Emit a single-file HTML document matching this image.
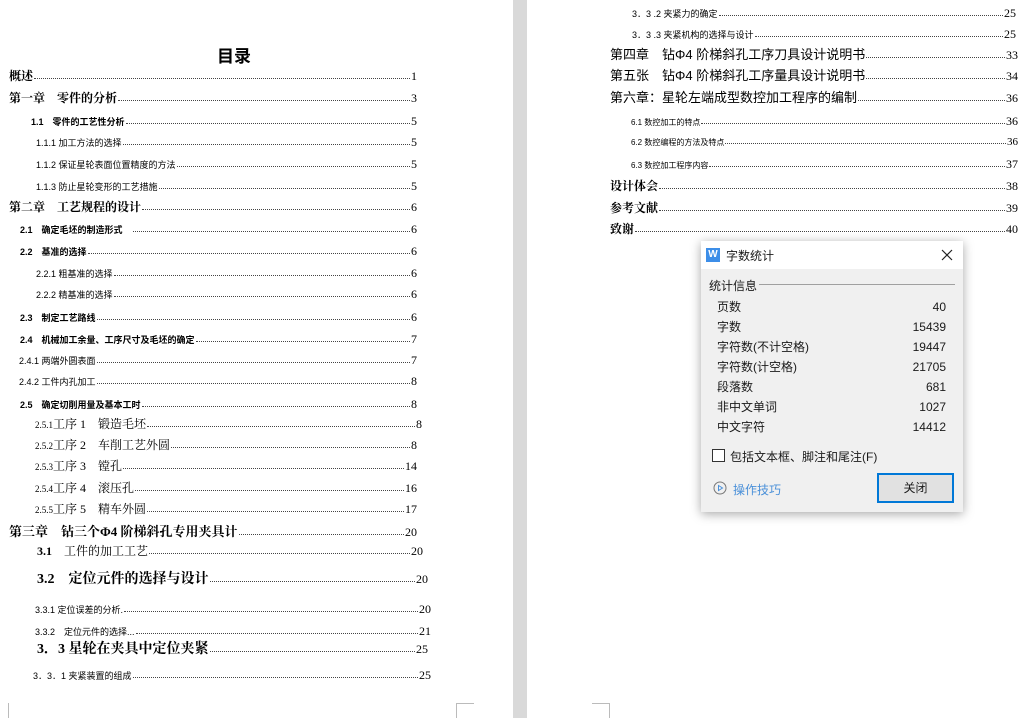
<!DOCTYPE html>
<html><head><meta charset="utf-8">
<style>
*{margin:0;padding:0;box-sizing:border-box}
body{width:1036px;height:718px;overflow:hidden;background:#fff;position:relative;font-family:"Liberation Serif","Noto Serif CJK SC","Noto Sans CJK SC",serif;color:#000}
.r{position:absolute;display:flex;align-items:baseline;white-space:nowrap;line-height:1}
.r .d{flex:1;border-bottom:1px dotted #444;margin:0 1px;transform:translateY(-1px)}
.b{font-weight:bold}
.s{font-family:"Liberation Sans","Noto Sans CJK SC",sans-serif}
.n{font-weight:normal;font-size:12px;font-family:"Liberation Serif",serif}
.gap{position:absolute;left:513px;top:0;width:14px;height:718px;background:#d9d9d9}
.dlg{position:absolute;left:701px;top:241px;width:262px;height:271px;background:#f0f0f0;box-shadow:0 2px 10px rgba(0,0,0,.35);font-family:"Liberation Sans","Noto Sans CJK SC",sans-serif;font-size:12px;color:#1a1a1a}
.dlg .t{height:28px;background:#fff;position:relative}
.dlg .row{position:absolute;left:16px;right:17px;display:flex;justify-content:space-between;align-items:baseline;line-height:14px}
</style></head><body>
<div class="gap"></div>
<div style="position:absolute;left:217px;top:42px;font-size:17px;font-weight:bold;font-family:'Noto Sans CJK SC',sans-serif">目录</div>

<div class="r b" style="left:9px;top:70px;width:408px;font-size:12px"><span>概述</span><span class="d"></span><span class="n">1</span></div>
<div class="r b" style="left:9px;top:92px;width:408px;font-size:12px"><span>第一章　零件的分析</span><span class="d"></span><span class="n">3</span></div>
<div class="r b s" style="left:31px;top:115px;width:386px;font-size:9px"><span>1.1　零件的工艺性分析</span><span class="d"></span><span class="n">5</span></div>
<div class="r s" style="left:36px;top:136px;width:381px;font-size:9px"><span>1.1.1 加工方法的选择</span><span class="d"></span><span class="n">5</span></div>
<div class="r s" style="left:36px;top:158px;width:381px;font-size:9px"><span>1.1.2 保证星轮表面位置精度的方法</span><span class="d"></span><span class="n">5</span></div>
<div class="r s" style="left:36px;top:180px;width:381px;font-size:9px"><span>1.1.3 防止星轮变形的工艺措施</span><span class="d"></span><span class="n">5</span></div>
<div class="r b" style="left:9px;top:201px;width:408px;font-size:12px"><span>第二章　工艺规程的设计</span><span class="d"></span><span class="n">6</span></div>
<div class="r b s" style="left:20px;top:223px;width:397px;font-size:9px"><span>2.1　确定毛坯的制造形式　</span><span class="d"></span><span class="n">6</span></div>
<div class="r b s" style="left:20px;top:245px;width:397px;font-size:9px"><span>2.2　基准的选择</span><span class="d"></span><span class="n">6</span></div>
<div class="r s" style="left:36px;top:267px;width:381px;font-size:9px"><span>2.2.1 粗基准的选择</span><span class="d"></span><span class="n">6</span></div>
<div class="r s" style="left:36px;top:288px;width:381px;font-size:9px"><span>2.2.2 精基准的选择</span><span class="d"></span><span class="n">6</span></div>
<div class="r b s" style="left:20px;top:311px;width:397px;font-size:9px"><span>2.3　制定工艺路线</span><span class="d"></span><span class="n">6</span></div>
<div class="r b s" style="left:20px;top:333px;width:397px;font-size:9px"><span>2.4　机械加工余量、工序尺寸及毛坯的确定</span><span class="d"></span><span class="n">7</span></div>
<div class="r s" style="left:19px;top:354px;width:398px;font-size:9px"><span>2.4.1 两端外圆表面</span><span class="d"></span><span class="n">7</span></div>
<div class="r s" style="left:19px;top:375px;width:398px;font-size:9px"><span>2.4.2 工件内孔加工</span><span class="d"></span><span class="n">8</span></div>
<div class="r b s" style="left:20px;top:398px;width:397px;font-size:9px"><span>2.5　确定切削用量及基本工时</span><span class="d"></span><span class="n">8</span></div>
<div class="r" style="left:35px;top:418px;width:387px;font-size:12px"><span><small style="font-size:9px">2.5.1</small>工序 1　锻造毛坯</span><span class="d"></span><span>8</span></div>
<div class="r" style="left:35px;top:439px;width:382px;font-size:12px"><span><small style="font-size:9px">2.5.2</small>工序 2　车削工艺外圆</span><span class="d"></span><span>8</span></div>
<div class="r" style="left:35px;top:460px;width:382px;font-size:12px"><span><small style="font-size:9px">2.5.3</small>工序 3　镗孔</span><span class="d"></span><span>14</span></div>
<div class="r" style="left:35px;top:482px;width:382px;font-size:12px"><span><small style="font-size:9px">2.5.4</small>工序 4　滚压孔</span><span class="d"></span><span>16</span></div>
<div class="r" style="left:35px;top:503px;width:382px;font-size:12px"><span><small style="font-size:9px">2.5.5</small>工序 5　精车外圆</span><span class="d"></span><span>17</span></div>
<div class="r b" style="left:9px;top:525px;width:408px;font-size:13px"><span>第三章　钻三个Φ4 阶梯斜孔专用夹具计</span><span class="d"></span><span class="n">20</span></div>
<div class="r" style="left:37px;top:545px;width:386px;font-size:12px"><span><b>3.1</b>　工件的加工工艺</span><span class="d"></span><span>20</span></div>
<div class="r b" style="left:37px;top:573px;width:391px;font-size:14px"><span>3.2　定位元件的选择与设计</span><span class="d"></span><span class="n">20</span></div>
<div class="r s" style="left:35px;top:603px;width:396px;font-size:9px"><span>3.3.1 定位误差的分析.</span><span class="d"></span><span class="n">20</span></div>
<div class="r s" style="left:35px;top:625px;width:396px;font-size:9px"><span>3.3.2　定位元件的选择...</span><span class="d"></span><span class="n">21</span></div>
<div class="r b" style="left:37px;top:643px;width:391px;font-size:14px"><span>3．3 星轮在夹具中定位夹紧</span><span class="d"></span><span class="n">25</span></div>
<div class="r s" style="left:33px;top:669px;width:398px;font-size:9px"><span>3．3．1 夹紧装置的组成</span><span class="d"></span><span class="n">25</span></div>
<div style="position:absolute;left:456px;top:703px;width:18px;height:15px;border-left:1px solid #bbb;border-top:1px solid #bbb"></div>
<div style="position:absolute;left:8px;top:703px;width:1px;height:15px;background:#bbb"></div>
<div style="position:absolute;left:592px;top:703px;width:18px;height:15px;border-right:1px solid #bbb;border-top:1px solid #bbb"></div>

<div class="r s" style="left:632px;top:7px;width:384px;font-size:9px"><span>3．3 .2 夹紧力的确定</span><span class="d"></span><span class="n">25</span></div>
<div class="r s" style="left:632px;top:28px;width:384px;font-size:9px"><span>3．3 .3 夹紧机构的选择与设计</span><span class="d"></span><span class="n">25</span></div>
<div class="r s" style="left:610px;top:48px;width:408px;font-size:13px"><span>第四章　钻Φ4 阶梯斜孔工序刀具设计说明书</span><span class="d"></span><span class="n">33</span></div>
<div class="r s" style="left:610px;top:69px;width:408px;font-size:13px"><span>第五张　钻Φ4 阶梯斜孔工序量具设计说明书</span><span class="d"></span><span class="n">34</span></div>
<div class="r s" style="left:610px;top:91px;width:408px;font-size:13px"><span>第六章：星轮左端成型数控加工程序的编制</span><span class="d"></span><span class="n">36</span></div>
<div class="r s" style="left:631px;top:115px;width:387px;font-size:8px"><span>6.1 数控加工的特点</span><span class="d"></span><span class="n">36</span></div>
<div class="r s" style="left:631px;top:137px;width:387px;font-size:8px"><span>6.2 数控编程的方法及特点</span><span class="d"></span><span class="n" style="font-size:11px">36</span></div>
<div class="r s" style="left:631px;top:158px;width:387px;font-size:8px"><span>6.3 数控加工程序内容</span><span class="d"></span><span class="n">37</span></div>
<div class="r b" style="left:610px;top:180px;width:408px;font-size:12px"><span>设计体会</span><span class="d"></span><span class="n">38</span></div>
<div class="r b" style="left:610px;top:202px;width:408px;font-size:12px"><span>参考文献</span><span class="d"></span><span class="n">39</span></div>
<div class="r b" style="left:610px;top:223px;width:408px;font-size:12px"><span>致谢</span><span class="d"></span><span class="n">40</span></div>

<div class="dlg">
 <div class="t">
  <div style="position:absolute;left:5px;top:7px;width:14px;height:14px;background:#3d8ee8;color:#fff;font-size:10px;line-height:14px;text-align:center;font-weight:bold">W</div>
  <div style="position:absolute;left:25px;top:6px;font-size:12px">字数统计</div>
  <svg style="position:absolute;left:240px;top:8px" width="12" height="12"><path d="M1 1L11 11M11 1L1 11" stroke="#222" stroke-width="1.2"/></svg>
 </div>
 <div style="position:absolute;left:8px;top:36px">统计信息</div>
 <div style="position:absolute;left:58px;right:8px;top:43px;height:1px;background:#a0a0a0"></div>
 <div class="row" style="top:59px"><span>页数</span><span>40</span></div>
 <div class="row" style="top:79px"><span>字数</span><span>15439</span></div>
 <div class="row" style="top:99px"><span>字符数(不计空格)</span><span>19447</span></div>
 <div class="row" style="top:119px"><span>字符数(计空格)</span><span>21705</span></div>
 <div class="row" style="top:139px"><span>段落数</span><span>681</span></div>
 <div class="row" style="top:159px"><span>非中文单词</span><span>1027</span></div>
 <div class="row" style="top:179px"><span>中文字符</span><span>14412</span></div>
 <div style="position:absolute;left:11px;top:208px;width:13px;height:13px;border:1px solid #333;background:#fff"></div>
 <div style="position:absolute;left:29px;top:207px">包括文本框、脚注和尾注(F)</div>
 <svg style="position:absolute;left:12px;top:240px" width="14" height="14"><circle cx="7" cy="7" r="6" fill="none" stroke="#777"/><path d="M5.5 4.5L9.5 7L5.5 9.5Z" fill="none" stroke="#4a90d9"/></svg>
 <div style="position:absolute;left:32px;top:240px;color:#4a90d9">操作技巧</div>
 <div style="position:absolute;left:176px;top:232px;width:77px;height:30px;border:2px solid #0078d7;background:#e1e1e1;text-align:center;line-height:26px">关闭</div>
</div>
</body></html>
